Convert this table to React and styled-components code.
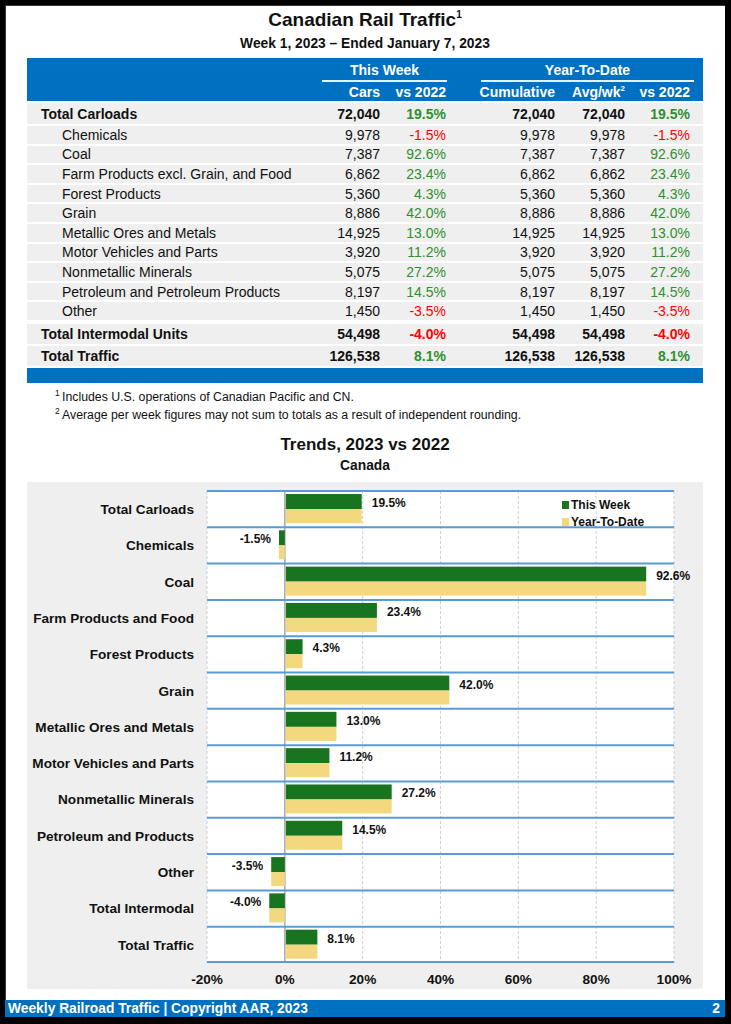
import React from "react";
import styled, { createGlobalStyle } from "styled-components";

const BLUE = "#0070c0";
const GREEN_TEXT = "#2f8f2f";
const RED_TEXT = "#ff0000";
const BAR_GREEN = "#19741f";
const BAR_YELLOW = "#f3d87f";

const GlobalStyle = createGlobalStyle`
	html, body {
		margin: 0;
		padding: 0;
		background: #000;
	}
	body {
		font-family: "Liberation Sans", Arial, sans-serif;
		color: #111;
	}
`;

const tableRows = [
	{ label: "Total Carloads", cars: "72,040", vs: "19.5%", cum: "72,040", avg: "72,040", ytd: "19.5%", total: true },
	{ label: "Chemicals", cars: "9,978", vs: "-1.5%", cum: "9,978", avg: "9,978", ytd: "-1.5%" },
	{ label: "Coal", cars: "7,387", vs: "92.6%", cum: "7,387", avg: "7,387", ytd: "92.6%" },
	{ label: "Farm Products excl. Grain, and Food", cars: "6,862", vs: "23.4%", cum: "6,862", avg: "6,862", ytd: "23.4%" },
	{ label: "Forest Products", cars: "5,360", vs: "4.3%", cum: "5,360", avg: "5,360", ytd: "4.3%" },
	{ label: "Grain", cars: "8,886", vs: "42.0%", cum: "8,886", avg: "8,886", ytd: "42.0%" },
	{ label: "Metallic Ores and Metals", cars: "14,925", vs: "13.0%", cum: "14,925", avg: "14,925", ytd: "13.0%" },
	{ label: "Motor Vehicles and Parts", cars: "3,920", vs: "11.2%", cum: "3,920", avg: "3,920", ytd: "11.2%" },
	{ label: "Nonmetallic Minerals", cars: "5,075", vs: "27.2%", cum: "5,075", avg: "5,075", ytd: "27.2%" },
	{ label: "Petroleum and Petroleum Products", cars: "8,197", vs: "14.5%", cum: "8,197", avg: "8,197", ytd: "14.5%" },
	{ label: "Other", cars: "1,450", vs: "-3.5%", cum: "1,450", avg: "1,450", ytd: "-3.5%" },
	{ label: "Total Intermodal Units", cars: "54,498", vs: "-4.0%", cum: "54,498", avg: "54,498", ytd: "-4.0%", total: true, gap: 4 },
	{ label: "Total Traffic", cars: "126,538", vs: "8.1%", cum: "126,538", avg: "126,538", ytd: "8.1%", total: true },
];

const chartRows = [
	{ label: "Total Carloads", week: 19.5, ytd: 19.5 },
	{ label: "Chemicals", week: -1.5, ytd: -1.5 },
	{ label: "Coal", week: 92.6, ytd: 92.6 },
	{ label: "Farm Products and Food", week: 23.4, ytd: 23.4 },
	{ label: "Forest Products", week: 4.3, ytd: 4.3 },
	{ label: "Grain", week: 42.0, ytd: 42.0 },
	{ label: "Metallic Ores and Metals", week: 13.0, ytd: 13.0 },
	{ label: "Motor Vehicles and Parts", week: 11.2, ytd: 11.2 },
	{ label: "Nonmetallic Minerals", week: 27.2, ytd: 27.2 },
	{ label: "Petroleum and Products", week: 14.5, ytd: 14.5 },
	{ label: "Other", week: -3.5, ytd: -3.5 },
	{ label: "Total Intermodal", week: -4.0, ytd: -4.0 },
	{ label: "Total Traffic", week: 8.1, ytd: 8.1 },
];

const axisTicks = ["-20%", "0%", "20%", "40%", "60%", "80%", "100%"];

const PLOT_W = 467;
const PLOT_H = 472;
const ROW_H = PLOT_H / chartRows.length;
const xOf = (v) => ((v + 20) / 120) * PLOT_W;

function PlotDrawing() {
	const x0 = xOf(0);
	return (
		<PlotSvg width={PLOT_W} height={PLOT_H} viewBox={`0 0 ${PLOT_W} ${PLOT_H}`}>
			<rect x="0" y="0" width={PLOT_W} height={PLOT_H} fill="#fff" />
			{[-20, 20, 40, 60, 80, 100].map((v) => (
				<line
					key={v}
					x1={xOf(v)}
					x2={xOf(v)}
					y1="0"
					y2={PLOT_H}
					stroke="#cfcfcf"
					strokeWidth="1"
					strokeDasharray="3 2"
				/>
			))}
			<line x1={x0} x2={x0} y1="0" y2={PLOT_H} stroke="#a8a8a8" strokeWidth="1.5" />
			{chartRows.map((r, i) => {
				const top = i * ROW_H;
				const wx = xOf(r.week);
				const yx = xOf(r.ytd);
				const pos = r.week >= 0;
				return (
					<g key={r.label}>
						<rect
							x={Math.min(wx, x0) + (pos ? 1 : 0)}
							y={top + 3}
							width={Math.abs(wx - x0)}
							height="15"
							fill={BAR_GREEN}
						/>
						<rect
							x={Math.min(yx, x0) + (pos ? 1 : 0)}
							y={top + 18}
							width={Math.abs(yx - x0)}
							height="14"
							fill={BAR_YELLOW}
						/>
						<ValueText
							x={pos ? wx + 11 : wx - 8}
							y={top + 16}
							textAnchor={pos ? "start" : "end"}
						>
							{r.week.toFixed(1)}%
						</ValueText>
					</g>
				);
			})}
			{chartRows.map((_, i) => (
				<line
					key={"h" + i}
					x1="0"
					x2={PLOT_W}
					y1={i * ROW_H}
					y2={i * ROW_H}
					stroke="#5b9bd5"
					strokeWidth="2"
				/>
			))}
			<line x1="0" x2={PLOT_W} y1={PLOT_H - 1} y2={PLOT_H - 1} stroke="#5b9bd5" strokeWidth="2" />
		</PlotSvg>
	);
}

export default function App() {
	return (
		<>
			<GlobalStyle />
			<Page>
				<Content>
					<Title>
						Canadian Rail Traffic<sup>1</sup>
					</Title>
					<Subtitle>Week 1, 2023 – Ended January 7, 2023</Subtitle>

					<Table>
						<HeaderBand>
							<GroupCell $col="2 / 4">This Week</GroupCell>
							<GroupCell $col="4 / 7" $ml={35} $mr={-4}>
								Year-To-Date
							</GroupCell>
							<HeadCell $col="2">Cars</HeadCell>
							<HeadCell $col="3">vs 2022</HeadCell>
							<HeadCell $col="4">Cumulative</HeadCell>
							<HeadCell $col="5">
								Avg/wk<sup>2</sup>
							</HeadCell>
							<HeadCell $col="6">vs 2022</HeadCell>
						</HeaderBand>

						{tableRows.map((r, i) => (
							<BodyRow key={r.label} $total={r.total} $first={i === 0} $gap={r.gap}>
								<LabelCell $total={r.total}>{r.label}</LabelCell>
								<NumCell>{r.cars}</NumCell>
								<PctCell $neg={r.vs.startsWith("-")}>{r.vs}</PctCell>
								<NumCell>{r.cum}</NumCell>
								<NumCell>{r.avg}</NumCell>
								<PctCell $neg={r.ytd.startsWith("-")}>{r.ytd}</PctCell>
							</BodyRow>
						))}
						<BottomBand />
					</Table>

					<Notes>
						<Note>
							<sup>1</sup>Includes U.S. operations of Canadian Pacific and CN.
						</Note>
						<Note>
							<sup>2</sup>Average per week figures may not sum to totals as a result of independent rounding.
						</Note>
					</Notes>

					<ChartTitle>Trends, 2023 vs 2022</ChartTitle>
					<ChartSubtitle>Canada</ChartSubtitle>

					<ChartBox>
						<CategoryList>
							{chartRows.map((r) => (
								<Category key={r.label}>{r.label}</Category>
							))}
						</CategoryList>
						<PlotColumn>
							<PlotWrap>
								<PlotDrawing />
								<Legend>
									<LegendItem $color={BAR_GREEN}>This Week</LegendItem>
									<LegendItem $color={BAR_YELLOW}>Year-To-Date</LegendItem>
								</Legend>
							</PlotWrap>
							<Axis>
								{axisTicks.map((t) => (
									<Tick key={t}>{t}</Tick>
								))}
							</Axis>
						</PlotColumn>
					</ChartBox>
				</Content>
				<Footer>
					<span>Weekly Railroad Traffic | Copyright AAR, 2023</span>
					<span>2</span>
				</Footer>
			</Page>
		</>
	);
}

const Page = styled.div`
	width: 720px;
	height: 1012px;
	margin: 5px 0 0 5px;
	background: #fff;
	display: flex;
	flex-direction: column;
	box-shadow: inset 1px 1px 0 #3a3a3a;
`;

const Content = styled.div`
	flex: 1;
	display: flex;
	flex-direction: column;
	align-items: center;
	padding-top: 4px;
`;

const Title = styled.h1`
	margin: 0;
	font-size: 19px;
	line-height: 22px;
	font-weight: 700;

	sup {
		font-size: 10px;
		vertical-align: 8px;
		line-height: 0;
	}
`;

const Subtitle = styled.div`
	margin-top: 4px;
	font-size: 13.8px;
	line-height: 18px;
	font-weight: 700;
`;

const Table = styled.div`
	width: 676px;
	margin-top: 5px;
	display: flex;
	flex-direction: column;
`;

const columns = "293px 60px 66px 109px 70px 65px";

const HeaderBand = styled.div`
	display: grid;
	grid-template-columns: ${columns};
	grid-template-rows: 24px 19px;
	padding-right: 13px;
	height: 43px;
	background: ${BLUE};
	color: #fff;
	font-weight: 700;
	font-size: 14px;
`;

const GroupCell = styled.div`
	grid-row: 1;
	grid-column: ${(p) => p.$col};
	margin-left: ${(p) => p.$ml || 2}px;
	margin-right: ${(p) => p.$mr || -1}px;
	text-align: center;
	line-height: 20px;
	padding-top: 2px;
	border-bottom: 2px solid #e9f1fa;
	box-sizing: border-box;
	height: 24px;
`;

const HeadCell = styled.div`
	grid-row: 2;
	grid-column: ${(p) => p.$col};
	text-align: right;
	line-height: 20px;
	white-space: nowrap;

	sup {
		font-size: 8px;
		vertical-align: 6px;
		line-height: 0;
	}
`;

const BodyRow = styled.div`
	display: grid;
	grid-template-columns: ${columns};
	align-items: center;
	padding-right: 13px;
	background: #efefef;
	font-size: 14px;
	height: ${(p) => (p.$first ? "21px" : p.$total ? "20px" : "17.6px")};
	margin-top: ${(p) => (p.$first ? 2 : p.$gap || 2)}px;
	font-weight: ${(p) => (p.$total ? 700 : 400)};
`;

const LabelCell = styled.div`
	padding-left: ${(p) => (p.$total ? 14 : 35)}px;
	white-space: nowrap;
`;

const NumCell = styled.div`
	text-align: right;
	white-space: nowrap;
`;

const PctCell = styled(NumCell)`
	color: ${(p) => (p.$neg ? RED_TEXT : GREEN_TEXT)};
`;

const BottomBand = styled.div`
	height: 15px;
	margin-top: 2px;
	background: ${BLUE};
`;

const Notes = styled.div`
	align-self: flex-start;
	margin: 5px 0 0 50px;
`;

const Note = styled.div`
	font-size: 12.3px;
	line-height: 18px;

	sup {
		display: inline-block;
		width: 7px;
		font-size: 8.5px;
		vertical-align: 5px;
		line-height: 0;
	}
`;

const ChartTitle = styled.div`
	margin-top: 10px;
	font-size: 17px;
	line-height: 22px;
	font-weight: 700;
`;

const ChartSubtitle = styled.div`
	margin-top: 1px;
	font-size: 13.8px;
	line-height: 18px;
	font-weight: 700;
`;

const ChartBox = styled.div`
	width: 676px;
	margin-top: 7px;
	box-sizing: border-box;
	padding: 9px 29px 0 0;
	height: 507px;
	background: #efefef;
	display: grid;
	grid-template-columns: 180px ${PLOT_W}px;
`;

const CategoryList = styled.div`
	display: grid;
	grid-template-rows: repeat(${chartRows.length}, ${ROW_H}px);
	padding-right: 13px;
`;

const Category = styled.div`
	display: flex;
	align-items: center;
	justify-content: flex-end;
	font-size: 13.6px;
	font-weight: 700;
	white-space: nowrap;
	padding-top: 1px;
`;

const PlotColumn = styled.div`
	display: flex;
	flex-direction: column;
`;

const PlotWrap = styled.div`
	position: relative;
	width: ${PLOT_W}px;
	height: ${PLOT_H}px;
`;

const PlotSvg = styled.svg`
	display: block;
	overflow: visible;
`;

const ValueText = styled.text`
	font-family: "Liberation Sans", Arial, sans-serif;
	font-size: 12px;
	font-weight: 700;
	fill: #111;
`;

const Legend = styled.div`
	position: absolute;
	left: 355px;
	top: 6px;
	display: flex;
	flex-direction: column;
`;

const LegendItem = styled.div`
	display: flex;
	align-items: center;
	gap: 2px;
	font-size: 12px;
	font-weight: 700;
	line-height: 17px;
	white-space: nowrap;

	&::before {
		content: "";
		width: 7px;
		height: 8px;
		background: ${(p) => p.$color};
	}
`;

const Axis = styled.div`
	display: grid;
	grid-template-columns: repeat(7, ${PLOT_W / 6}px);
	margin-left: ${-PLOT_W / 12}px;
	width: ${(PLOT_W / 6) * 7}px;
	padding-top: 8px;
`;

const Tick = styled.div`
	text-align: center;
	font-size: 13.6px;
	font-weight: 700;
	line-height: 18px;
`;

const Footer = styled.div`
	height: 17px;
	background: ${BLUE};
	color: #fff;
	font-size: 13.8px;
	font-weight: 700;
	line-height: 17px;
	display: flex;
	justify-content: space-between;
	padding: 0 5px 0 3px;
`;
